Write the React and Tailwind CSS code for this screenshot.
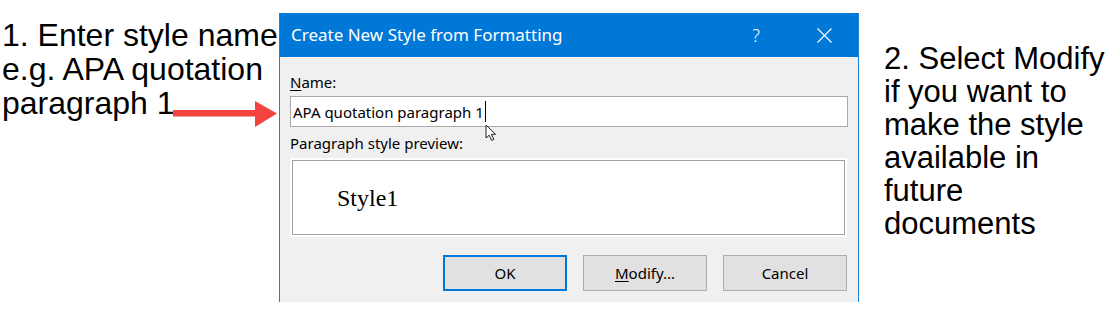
import React from 'react';

const ui = { fontFamily: '"Noto Sans", "Open Sans", sans-serif' };
const note = { fontFamily: '"Liberation Sans", Arial, sans-serif' };

const Button = ({ children, primary }) => (
  <div
    className={`w-[124px] h-[36px] flex items-center justify-center bg-[#e1e1e1] text-[15px] text-black ${
      primary ? 'border-2 border-[#0078d7]' : 'border border-[#adadad]'
    }`}
  >
    {children}
  </div>
);

const App = () => {
  return (
    <div className="relative w-[1110px] h-[312px] bg-white flex overflow-hidden">
      {/* left note */}
      <div className="w-[279px] shrink-0 pt-[18px] pl-[2px] text-[32px] leading-[34px] text-black whitespace-nowrap" style={note}>
        <div>1. Enter style name</div>
        <div>e.g. APA quotation</div>
        <div>paragraph 1</div>
      </div>

      {/* dialog */}
      <div className="mt-[13px] w-[580px] h-[289px] shrink-0 flex flex-col bg-[#f0f0f0] border-x border-[#1883d7]" style={ui}>
        <div className="h-[44px] bg-[#0078d7] flex items-center text-white">
          <div className="pl-[11px] text-[17px] flex-1">Create New Style from Formatting</div>
          <div className="text-[18px] font-light w-[20px] text-center mr-[51px]">?</div>
          <svg width="15" height="15" viewBox="0 0 15 15" className="mr-[26px]">
            <path d="M0.5 0.5 L14.5 14.5 M14.5 0.5 L0.5 14.5" stroke="white" strokeWidth="1.1" fill="none" />
          </svg>
        </div>

        <div className="flex flex-col px-[10px] text-[15px] leading-[20px] text-black">
          <div className="mt-[15px]">
            <span className="underline underline-offset-2">N</span>ame:
          </div>
          <div className="mt-[4px] h-[31px] bg-white border border-[#a9a9a9] flex items-center pl-[2px]">
            <span>APA quotation paragraph 1</span>
            <span className="w-px h-[21px] bg-black ml-px"></span>
          </div>
          <div className="mt-[6px]">Paragraph style preview:</div>
          <div className="mt-[5px] h-[79px] bg-white p-[2px] mr-px">
            <div className="h-full border border-[#a0a0a0] flex items-center pl-[44px]">
              <span className="text-[24px] leading-none" style={{ fontFamily: '"Liberation Serif", "Times New Roman", serif' }}>
                Style1
              </span>
            </div>
          </div>
          <div className="mt-[18px] flex justify-end gap-[16px] pr-px">
            <Button primary>OK</Button>
            <Button>
              <span className="underline underline-offset-2">M</span>odify...
            </Button>
            <Button>Cancel</Button>
          </div>
        </div>
      </div>

      {/* right note */}
      <div className="pl-[25px] pt-[42px] text-[31px] leading-[33px] text-black whitespace-nowrap" style={note}>
        <div>2. Select Modify</div>
        <div>if you want to</div>
        <div>make the style</div>
        <div>available in</div>
        <div>future</div>
        <div>documents</div>
      </div>

      {/* red arrow */}
      <svg className="absolute left-[173px] top-[100px]" width="104" height="28" viewBox="0 0 104 28">
        <rect x="0" y="10" width="84" height="6.5" fill="#f2433f" />
        <polygon points="82,1 104,13.5 82,27" fill="#f2433f" />
      </svg>

      {/* mouse pointer */}
      <svg className="absolute left-[485px] top-[124px]" width="14" height="19" viewBox="0 0 14 19">
        <path d="M1 1 L1 14 L4.2 11.2 L6.6 16.4 L8.8 15.4 L6.4 10.3 L10.6 10.3 Z" fill="white" stroke="#222" strokeWidth="1" strokeLinejoin="round" />
      </svg>
    </div>
  );
};

export default App;
